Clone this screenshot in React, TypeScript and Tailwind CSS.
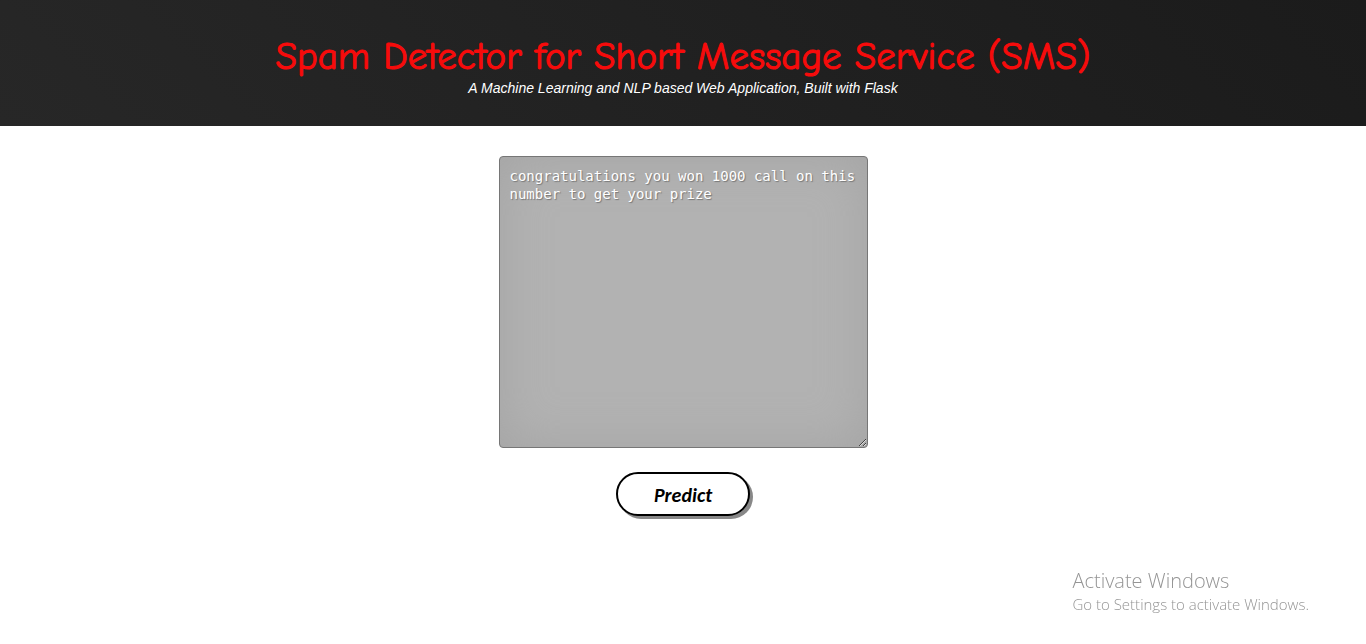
import { useState } from "react";

export default function App() {
  const [message, setMessage] = useState(
    "congratulations you won 1000 call on this number to get your prize",
  );

  return (
    <div className="min-h-screen bg-white">
      <header className="bg-linear-45 from-[#272727] to-[#1b1b1b] pt-9 pb-7 text-center">
        <h1 className="font-['Comic_Sans_MS','Comic_Neue','DejaVu_Sans',sans-serif] text-[39px] leading-[42px] text-[#f70b0b] [-webkit-text-stroke:1px_#f70b0b]">
          Spam Detector for Short Message Service (SMS)
        </h1>
        <p className="font-['Liberation_Sans',Arial,sans-serif] text-sm leading-5 text-white italic">
          A Machine Learning and NLP based Web Application, Built with Flask
        </p>
      </header>

      <main>
        <form
          className="flex flex-col items-center gap-6 pt-[30px]"
          onSubmit={(event) => event.preventDefault()}
        >
          <textarea
            aria-label="Message"
            value={message}
            spellCheck={false}
            onChange={(event) => setMessage(event.target.value)}
            className="h-[292px] w-[369px] resize rounded-[4px] border border-[#767676] bg-[#b2b2b2] p-[10px] font-['DejaVu_Sans_Mono',monospace] text-sm leading-[18px] text-white shadow-[inset_0_0_50px_#a4a4a4] outline-none [text-shadow:1px_1px_1px_#777]"
          />
          <button
            type="submit"
            className="h-11 w-[134px] rounded-full border-2 border-black bg-white pt-0.5 font-['Calibri','Lato',sans-serif] text-[20px] font-bold text-black italic shadow-[3px_3px_0_#888]"
          >
            Predict
          </button>
        </form>
      </main>

      <aside className="pointer-events-none fixed right-[57px] bottom-[29px] font-['Open_Sans','Noto_Sans',sans-serif] font-light text-[#959595]">
        <p className="text-xl leading-6">Activate Windows</p>
        <p className="text-[15px] leading-[22px]">Go to Settings to activate Windows.</p>
      </aside>
    </div>
  );
}
